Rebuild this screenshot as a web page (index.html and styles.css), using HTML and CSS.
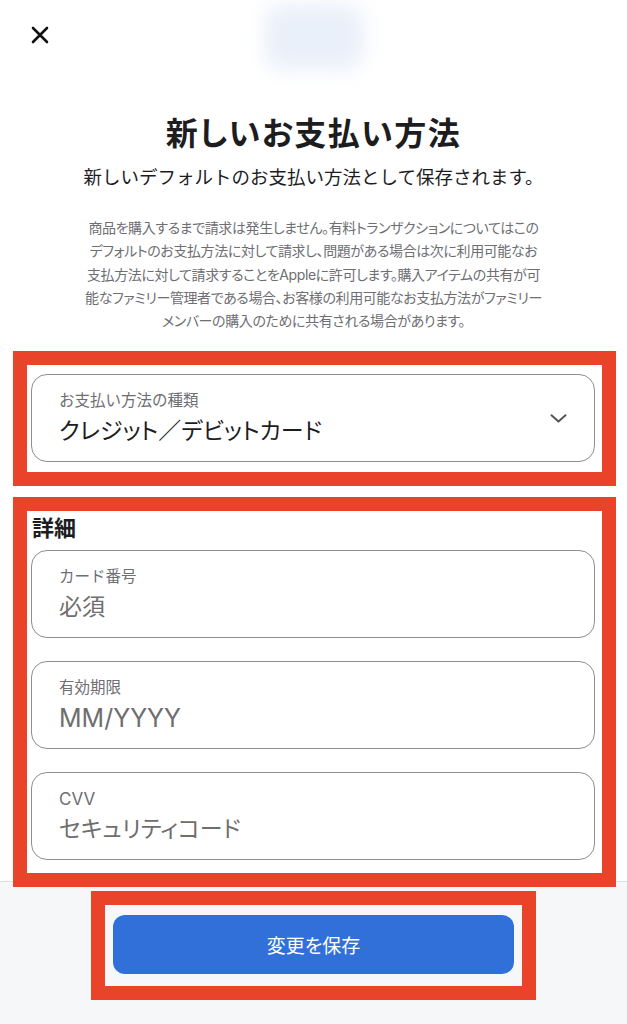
FILE: index.html
```html
<!DOCTYPE html>
<html lang="ja">
<head>
  <meta charset="UTF-8">
  <meta name="viewport" content="width=device-width, initial-scale=1.0">
  <title>新しいお支払い方法</title>
  <link rel="stylesheet" href="styles.css">
</head>
<body>
  <div class="sheet">
    <!-- Top bar: close button and blurred brand mark -->
    <header class="topbar">
      <button class="close" type="button" aria-label="閉じる">
        <svg width="18" height="18" viewBox="0 0 18 18">
          <path d="M2 2 L16 16 M16 2 L2 16" stroke="#111" stroke-width="2.6" stroke-linecap="round"/>
        </svg>
      </button>
      <div class="brand-blur"></div>
      <div></div>
    </header>

    <section class="intro">
      <h1 class="title">新しいお支払い方法</h1>
      <p class="subtitle">新しいデフォルトのお支払い方法として保存されます。</p>
      <p class="notice">
        商品を購入するまで請求は発生しません。有料トランザクションについてはこの<br>
        デフォルトのお支払方法に対して請求し、問題がある場合は次に利用可能なお<br>
        支払方法に対して請求することをAppleに許可します。購入アイテムの共有が可<br>
        能なファミリー管理者である場合、お客様の利用可能なお支払方法がファミリー<br>
        メンバーの購入のために共有される場合があります。
      </p>
    </section>

    <!-- Payment type -->
    <div class="highlight type-box">
      <div class="field">
        <div class="field-text">
          <span class="field-label">お支払い方法の種類</span>
          <span class="field-value">クレジット／デビットカード</span>
        </div>
        <svg class="chevron" width="17" height="9" viewBox="0 0 17 9">
          <path d="M1.5 1.2 L8.5 7.6 L15.5 1.2" fill="none" stroke="#555" stroke-width="2" stroke-linecap="round" stroke-linejoin="round"/>
        </svg>
      </div>
    </div>

    <!-- Card details -->
    <div class="highlight details-box">
      <h2 class="section-title">詳細</h2>
      <div class="field-list">
        <div class="field">
          <div class="field-text">
            <span class="field-label">カード番号</span>
            <span class="field-value placeholder">必須</span>
          </div>
        </div>
        <div class="field">
          <div class="field-text">
            <span class="field-label">有効期限</span>
            <span class="field-value placeholder latin">MM/YYYY</span>
          </div>
        </div>
        <div class="field">
          <div class="field-text">
            <span class="field-label latin">CVV</span>
            <span class="field-value placeholder">セキュリティコード</span>
          </div>
        </div>
      </div>
    </div>

    <footer class="footer">
      <div class="highlight save-box">
        <button class="save" type="button">変更を保存</button>
      </div>
    </footer>
  </div>
</body>
</html>
```

FILE: styles.css
```css
/* Payment method sheet */
body {
  margin: 0;
  font-family: Inter, "Noto Sans CJK JP", "Noto Sans", sans-serif;
  background: #fff;
  color: #1d1d1f;
}
.sheet {
  display: flex;
  flex-direction: column;
  min-height: 1024px;
}
.topbar {
  display: grid;
  grid-template-columns: 1fr auto 1fr;
  height: 80px;
}
.close {
  justify-self: start;
  align-self: start;
  background: none;
  border: none;
  padding: 26px 0 0 31px;
  cursor: pointer;
}
.brand-blur {
  width: 100px;
  height: 66px;
  margin-top: 4px;
  background: #eaf0fa;
  border-radius: 18px;
  filter: blur(10px);
}
.intro {
  text-align: center;
}
.title {
  font-size: 32px;
  font-weight: 700;
  line-height: 36px;
  letter-spacing: 1.5px;
  font-feature-settings: "palt";
  margin: 36px 0 0;
}
.subtitle {
  font-size: 18.5px;
  line-height: 26px;
  margin: 12px 0 0;
}
.notice {
  font-size: 14px;
  line-height: 23.3px;
  letter-spacing: -0.4px;
  font-feature-settings: "palt";
  color: #6e6e73;
  margin: 26px 0 0;
  padding: 0 10px;
}
.highlight {
  position: relative;
  z-index: 1;
  border: 14px solid #e94329;
}
.type-box {
  margin: 19px 11px 0 13px;
  padding: 9px 7px 10px 4px;
}
.details-box {
  margin: 11px 11px -6px 13px;
  padding: 4px 7px 13px 4px;
}
.section-title {
  margin: 0 0 9px 1px;
  font-size: 22px;
  line-height: 26px;
  font-weight: 700;
}
.field-list {
  display: flex;
  flex-direction: column;
  gap: 23px;
}
.field {
  box-sizing: border-box;
  height: 88px;
  border: 1.5px solid #8e8e93;
  border-radius: 16px;
  padding: 0 27px;
  display: flex;
  align-items: center;
  justify-content: space-between;
}
.field-text {
  display: flex;
  flex-direction: column;
  gap: 7px;
}
.field-label {
  font-size: 15.5px;
  line-height: 18px;
  color: #6e6e73;
}
.field-value {
  font-size: 23px;
  line-height: 28px;
  font-feature-settings: "palt";
}
.field-value.latin {
  font-size: 25px;
}
.field-label.latin {
  font-size: 17px;
}
.placeholder {
  color: #6e6e6e;
}
.footer {
  flex: 1;
  display: flex;
  justify-content: center;
  align-items: flex-start;
  border-top: 1px solid #dedee0;
  background: #f6f7f9;
  padding-top: 9px;
}
.save-box {
  width: 445px;
  box-sizing: border-box;
  padding: 10px 8px 12px;
}
.save {
  width: 100%;
  height: 59px;
  border: none;
  border-radius: 12px;
  background: #3170d9;
  color: #fff;
  font-family: inherit;
  font-size: 19px;
  font-feature-settings: "palt";
  cursor: pointer;
}
```
